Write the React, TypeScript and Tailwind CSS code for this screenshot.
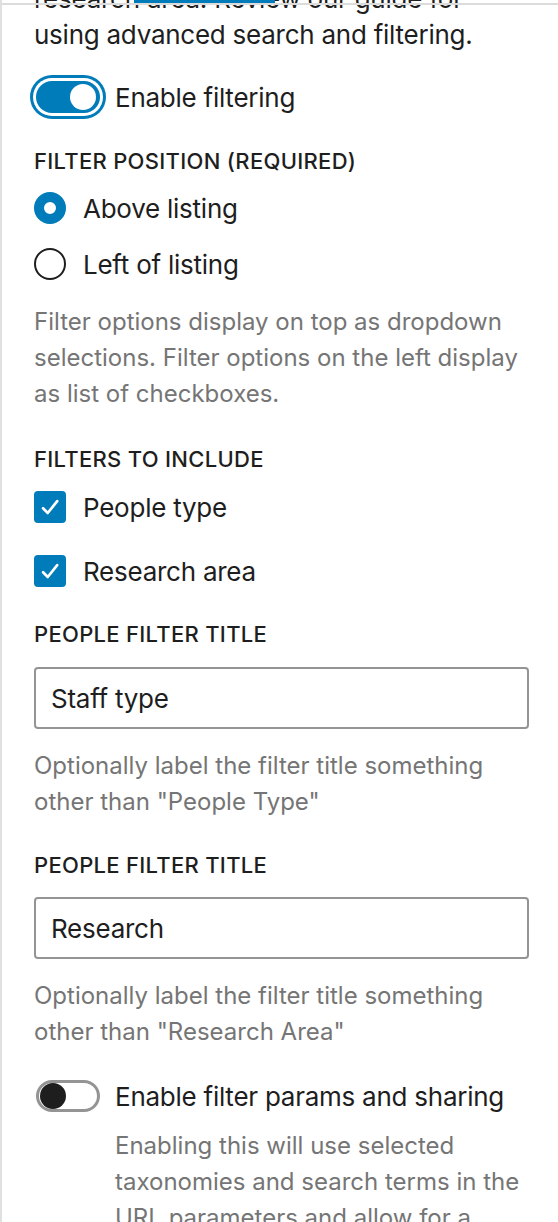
import React from 'react';
import { useState } from 'react';

const font = { fontFamily: 'Inter, "Liberation Sans", sans-serif' };

const Label: React.FC<{ children: React.ReactNode; className?: string }> = ({ children, className }) => (
  <div className={`text-[22px] leading-[32px] font-medium uppercase tracking-[0.3px] text-[#1e1e1e] ${className ?? ''}`}>
    {children}
  </div>
);

const Help: React.FC<{ children: React.ReactNode; className?: string }> = ({ children, className }) => (
  <p className={`text-[24px] leading-[36px] text-[#757575] ${className ?? ''}`}>{children}</p>
);

const Toggle: React.FC<{ on: boolean; onChange: () => void }> = ({ on, onChange }) => (
  <button
    onClick={onChange}
    className={
      on
        ? 'relative w-[64px] h-[32px] rounded-full bg-[#007cba] shrink-0 shadow-[0_0_0_3px_#fff,0_0_0_6px_#007cba]'
        : 'relative w-[64px] h-[32px] rounded-full bg-white border-[3px] border-[#949494] shrink-0'
    }
  >
    <span
      className={
        on
          ? 'absolute top-[3px] right-[4px] w-[26px] h-[26px] rounded-full bg-white'
          : 'absolute top-[0px] left-[1px] w-[26px] h-[26px] rounded-full bg-[#1e1e1e]'
      }
    />
  </button>
);

const Radio: React.FC<{ checked: boolean; label: string; onClick: () => void; className?: string }> = ({
  checked,
  label,
  onClick,
  className,
}) => (
  <div className={`flex items-center h-[40px] cursor-pointer ${className ?? ''}`} onClick={onClick}>
    <span
      className={
        checked
          ? 'w-[32px] h-[32px] rounded-full border-[10px] border-[#007cba] bg-white shrink-0'
          : 'w-[32px] h-[32px] rounded-full border-2 border-[#1e1e1e] bg-white shrink-0'
      }
    />
    <span className="ml-[17px] text-[26px] tracking-[-0.25px] text-[#1e1e1e]">{label}</span>
  </div>
);

const Check: React.FC<{ checked: boolean; label: string; onClick: () => void; className?: string }> = ({
  checked,
  label,
  onClick,
  className,
}) => (
  <div className={`flex items-center h-[40px] cursor-pointer ${className ?? ''}`} onClick={onClick}>
    <span
      className={
        checked
          ? 'w-[32px] h-[32px] rounded-[4px] bg-[#007cba] flex items-center justify-center shrink-0'
          : 'w-[32px] h-[32px] rounded-[4px] border-2 border-[#1e1e1e] bg-white shrink-0'
      }
    >
      {checked && (
        <svg width="32" height="32" viewBox="0 0 24 24" fill="none">
          <path d="M6.8 12.9l3.5 3.6L17.4 7.6" stroke="#fff" strokeWidth="2" strokeLinecap="round" strokeLinejoin="round" />
        </svg>
      )}
    </span>
    <span className="ml-[17px] text-[26px] tracking-[-0.25px] text-[#1e1e1e]">{label}</span>
  </div>
);

const TextInput: React.FC<{ value: string; onChange: (v: string) => void; className?: string }> = ({
  value,
  onChange,
  className,
}) => (
  <input
    value={value}
    onChange={(e) => onChange(e.target.value)}
    className={`block w-full h-[62px] px-[15px] border-2 border-[#949494] rounded-[4px] text-[26px] tracking-[-0.25px] text-[#1e1e1e] outline-none ${className ?? ''}`}
  />
);

const App: React.FC = () => {
  const [filtering, setFiltering] = useState(true);
  const [position, setPosition] = useState<'above' | 'left'>('above');
  const [peopleType, setPeopleType] = useState(true);
  const [researchArea, setResearchArea] = useState(true);
  const [peopleTitle, setPeopleTitle] = useState('Staff type');
  const [researchTitle, setResearchTitle] = useState('Research');
  const [sharing, setSharing] = useState(false);

  return (
    <div className="relative h-screen overflow-hidden bg-white border-l-2 border-[#e0e0e0]" style={font}>
      {/* sticky tab bar edge peeking in at the top */}
      <div className="absolute top-[3px] left-0 right-0 h-[1.5px] bg-[#dcdcdc] z-10" />
      <div className="absolute top-0 left-[132px] w-[141px] h-[3px] bg-[#007cba] z-10" />

      <div className="pl-[32px] pr-[29px]">
        <p className="mt-[-19px] text-[26px] leading-[36px] tracking-[-0.25px] text-[#1e1e1e]">
          research area. Review our guide for
          <br />
          using advanced search and filtering.
        </p>

        <div className="mt-[22px] h-[44px] flex items-center pl-[2px]">
          <Toggle on={filtering} onChange={() => setFiltering(!filtering)} />
          <span className="ml-[15px] text-[26px] tracking-[-0.25px] text-[#1e1e1e]">Enable filtering</span>
        </div>

        <Label className="mt-[26px]">Filter position (required)</Label>
        <Radio className="mt-[11px]" checked={position === 'above'} label="Above listing" onClick={() => setPosition('above')} />
        <Radio className="mt-[16px]" checked={position === 'left'} label="Left of listing" onClick={() => setPosition('left')} />
        <Help className="mt-[20px]">
          Filter options display on top as dropdown selections. Filter options on the left display as list of
          checkboxes.
        </Help>

        <Label className="mt-[31px]">Filters to include</Label>
        <Check className="mt-[12px]" checked={peopleType} label="People type" onClick={() => setPeopleType(!peopleType)} />
        <Check className="mt-[24px]" checked={researchArea} label="Research area" onClick={() => setResearchArea(!researchArea)} />

        <Label className="mt-[27px]">People filter title</Label>
        <TextInput className="mt-[17px]" value={peopleTitle} onChange={setPeopleTitle} />
        <Help className="mt-[19px]">Optionally label the filter title something other than "People Type"</Help>

        <Label className="mt-[29px]">People filter title</Label>
        <TextInput className="mt-[16px]" value={researchTitle} onChange={setResearchTitle} />
        <Help className="mt-[19px]">Optionally label the filter title something other than "Research Area"</Help>

        <div className="mt-[24px] h-[44px] flex items-center pl-[2px]">
          <Toggle on={sharing} onChange={() => setSharing(!sharing)} />
          <span className="ml-[15px] text-[26px] tracking-[-0.25px] text-[#1e1e1e]">Enable filter params and sharing</span>
        </div>
        <Help className="mt-[10px] pl-[81px]">
          Enabling this will use selected taxonomies and search terms in the URL parameters and allow for a
          shareable link.
        </Help>
      </div>
    </div>
  );
};

export default App;
